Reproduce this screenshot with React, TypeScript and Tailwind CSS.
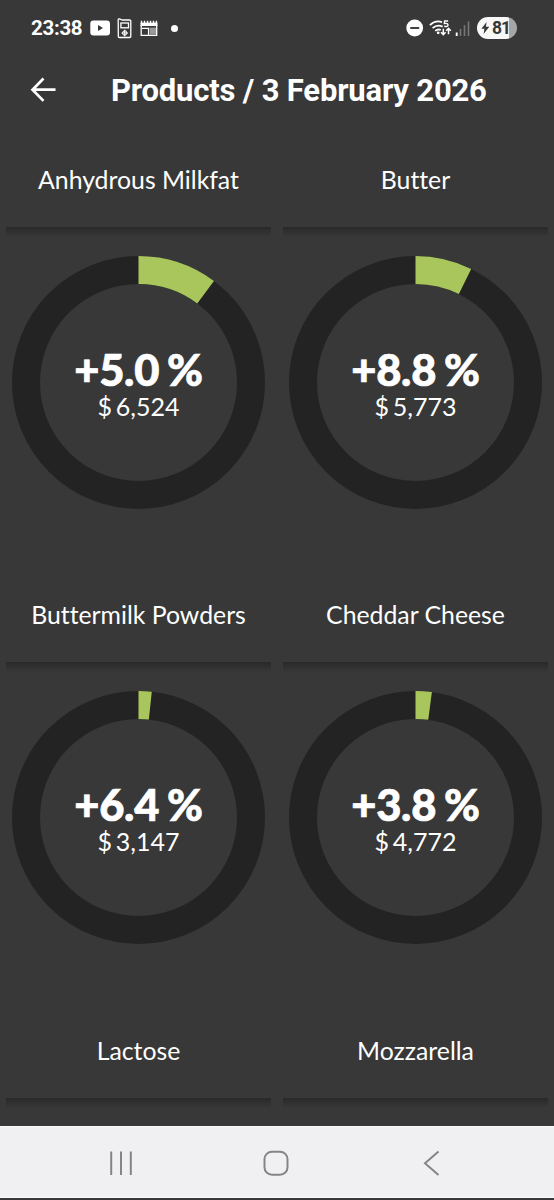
import React from 'react';

type Product = {
  name: string;
  change: string;
  price: string;
  angle: number;
};

const products: Product[] = [
  { name: 'Anhydrous Milkfat', change: '+5.0 %', price: '$ 6,524', angle: 36.6 },
  { name: 'Butter', change: '+8.8 %', price: '$ 5,773', angle: 26.1 },
  { name: 'Buttermilk Powders', change: '+6.4 %', price: '$ 3,147', angle: 6.1 },
  { name: 'Cheddar Cheese', change: '+3.8 %', price: '$ 4,772', angle: 7.5 },
  { name: 'Lactose', change: '', price: '', angle: 0 },
  { name: 'Mozzarella', change: '', price: '', angle: 0 },
];

const RADIUS = 112.5;

function StatusBar() {
  return (
    <div className="flex h-14 shrink-0 items-center justify-between pl-[31px] pr-[37px] font-['Roboto',sans-serif] text-white">
      <div className="flex items-center">
        <span className="w-[51px] whitespace-nowrap text-[20.5px] font-bold leading-6 tracking-[-0.3px]">23:38</span>
        <svg className="ml-2" width="21" height="16" viewBox="0 0 21 16">
          <rect x="0.3" y="0.5" width="19.7" height="15" rx="3.2" fill="#fff" />
          <path d="M8 5l5 3L8 11z" fill="#383838" />
        </svg>
        <svg className="ml-1.5" width="16" height="21" viewBox="0 0 16 21" fill="none" stroke="#fff">
          <path d="M1.2 2 Q1.2 .7 2.3 .9 L5.5 2 H12.5 Q13.8 2 13.8 3 V18.3 Q13.8 19.5 12.6 19.5 H2.5 Q1.3 19.5 1.3 18.3 Z" strokeWidth="1.3" />
          <rect x="3.9" y="5" width="7.6" height="4.8" strokeWidth="1.3" />
          <circle cx="7.7" cy="15" r="2.2" strokeWidth="1" />
          <path d="M7.7 11.8v6.4M4.5 15h6.4" strokeWidth="1.2" />
        </svg>
        <svg className="ml-[7px]" width="18" height="17" viewBox="0 0 18 17">
          <path d="M1.5 .8v3M4.5 .8v3M7.5 .8v3M10.5 .8v3M13.5 .8v3M16.4 .8v3" stroke="#fff" strokeWidth="1.4" />
          <path d="M.5 2.6h17v3.4H.5z" fill="#fff" />
          <path d="M1.2 5v10.3h15.5V5" fill="none" stroke="#fff" strokeWidth="1.3" />
          <path d="M2 8.3h6.5V15" fill="none" stroke="#fff" strokeWidth="1.2" />
          <path d="M9.5 7.6h6.5v7H9.5z" fill="#999" />
        </svg>
        <span className="ml-[13px] size-[7px] rounded-full bg-white"></span>
      </div>

      <div className="flex items-center">
        <svg width="18" height="18" viewBox="0 0 18 18">
          <circle cx="8.7" cy="9" r="8.4" fill="#fff" />
          <path d="M4.2 9h9" stroke="#383838" strokeWidth="1.9" />
        </svg>
        <svg className="ml-[5px]" width="24" height="18" viewBox="0 0 24 18" fill="none" stroke="#fff" strokeWidth="1.8">
          <path d="M.9 6.2Q6.5 .8 13 3.2" />
          <path d="M3.6 9.2Q8 5 13.6 7.6" />
          <path d="M6.2 11.9Q9 9.6 11.8 11" />
          <circle cx="9.2" cy="13.8" r="1.4" fill="#fff" stroke="none" />
          <path d="M19.2 2h-3.6l-.3 2.5q3.7-.6 3.7 1.5t-3.8 1.3" strokeWidth="1.4" />
          <path d="M14.3 9.8v5.6M12 13.2l2.3 2.5 2.3-2.5M19.5 15.2V9.6M17.2 11.8l2.3-2.5 2.3 2.5" strokeWidth="1.5" />
        </svg>
        <svg className="ml-0.5 mr-[3px]" width="16" height="17" viewBox="0 0 16 17">
          <path d="M1.7 12.5V16" stroke="#fff" strokeWidth="1.9" />
          <path d="M5.5 9v7M9.5 5.2V16M13.5 1.5V16" stroke="#777" strokeWidth="1.6" />
        </svg>
        <div className="ml-[3px] flex h-[22px] w-10 items-center overflow-hidden rounded-full bg-linear-to-r from-[#f8f8f8] from-80% to-[#a6a6a6] to-80% text-[#383838]">
          <svg className="ml-[4px]" width="9" height="12" viewBox="0 0 9 12">
            <path d="M5.6 0L.4 6.8h3L2.6 12 8.3 4.8H4.9z" fill="#383838" />
          </svg>
          <span className="ml-[2px] text-[17.5px] font-bold leading-5 tracking-[-1px]">81</span>
        </div>
      </div>
    </div>
  );
}

function Header() {
  return (
    <div className="flex h-[76.5px] shrink-0 items-start pl-[30px] pt-[17px] text-white">
      <svg className="mt-[4px]" width="26" height="26" viewBox="0 0 26 26" fill="none" stroke="#fff" strokeWidth="2.7">
        <path d="M25.5 12.7H2.5M13.5 1.5L2.5 12.7 13.5 23.9" />
      </svg>
      <h1 className="ml-[55px] mt-px whitespace-nowrap font-['Roboto',sans-serif] text-[31px] font-bold leading-[34px] tracking-[-0.18px]">
        Products / 3 February 2026
      </h1>
    </div>
  );
}

function Ring({ product }: { product: Product }) {
  const circumference = 2 * Math.PI * RADIUS;
  const filled = (product.angle / 360) * circumference;

  return (
    <div className="grid size-[253px] place-items-center">
      <svg className="col-start-1 row-start-1" width="253" height="253" viewBox="0 0 253 253" fill="none" strokeWidth="28">
        <circle cx="126.5" cy="126.5" r={RADIUS} stroke="#232323" />
        <circle
          cx="126.5"
          cy="126.5"
          r={RADIUS}
          stroke="#a9c65c"
          strokeDasharray={`${filled} ${circumference}`}
          transform="rotate(-90 126.5 126.5)"
        />
      </svg>
      <div className="col-start-1 row-start-1 flex flex-col items-center whitespace-nowrap pt-1 text-white">
        <span className="text-[43.5px] font-black leading-[44px] tracking-[-0.3px] [-webkit-text-stroke:0.7px_white] [word-spacing:-2px]">
          {product.change}
        </span>
        <span className="text-[25px] leading-[31px] [word-spacing:-2.5px]">{product.price}</span>
      </div>
    </div>
  );
}

function ProductCard({ product }: { product: Product }) {
  return (
    <div className="flex h-[435.5px] flex-col items-center">
      <h2 className="flex h-[94px] shrink-0 items-center whitespace-nowrap text-[24.8px] text-white [font-variant-ligatures:none]">
        {product.name}
      </h2>
      <div className="mb-[19px] h-[10px] w-full shrink-0 bg-linear-to-b from-[#292929] to-[#383838]"></div>
      {product.change && <Ring product={product} />}
    </div>
  );
}

function NavBar() {
  return (
    <div className="flex h-[72px] shrink-0 items-center border-y border-[#fafafa] bg-[#f0f0f2] pl-[108px] pt-px">
      <svg width="26" height="26" viewBox="0 0 26 26" stroke="#858587" strokeWidth="2">
        <path d="M3.2 1.5v23.5M13 1.5v23.5M22.8 1.5v23.5" />
      </svg>
      <svg className="ml-[129px]" width="26" height="26" viewBox="0 0 26 26" fill="none" stroke="#858587" strokeWidth="2">
        <rect x="1.5" y="1.7" width="23" height="23" rx="7.5" />
      </svg>
      <svg className="ml-[129px]" width="26" height="26" viewBox="0 0 26 26" fill="none" stroke="#858587" strokeWidth="2">
        <path d="M20.5 1.5L7 13.2 20.5 25" />
      </svg>
    </div>
  );
}

export default function App() {
  return (
    <div className="flex h-[1200px] w-[554px] flex-col overflow-hidden bg-[#383838] font-['Lato',sans-serif]">
      <StatusBar />
      <Header />
      <div className="h-[993.5px] shrink-0 overflow-hidden px-1.5">
        <div className="grid grid-cols-2 gap-x-3">
          {products.map((product) => (
            <ProductCard key={product.name} product={product} />
          ))}
        </div>
      </div>
      <NavBar />
    </div>
  );
}
